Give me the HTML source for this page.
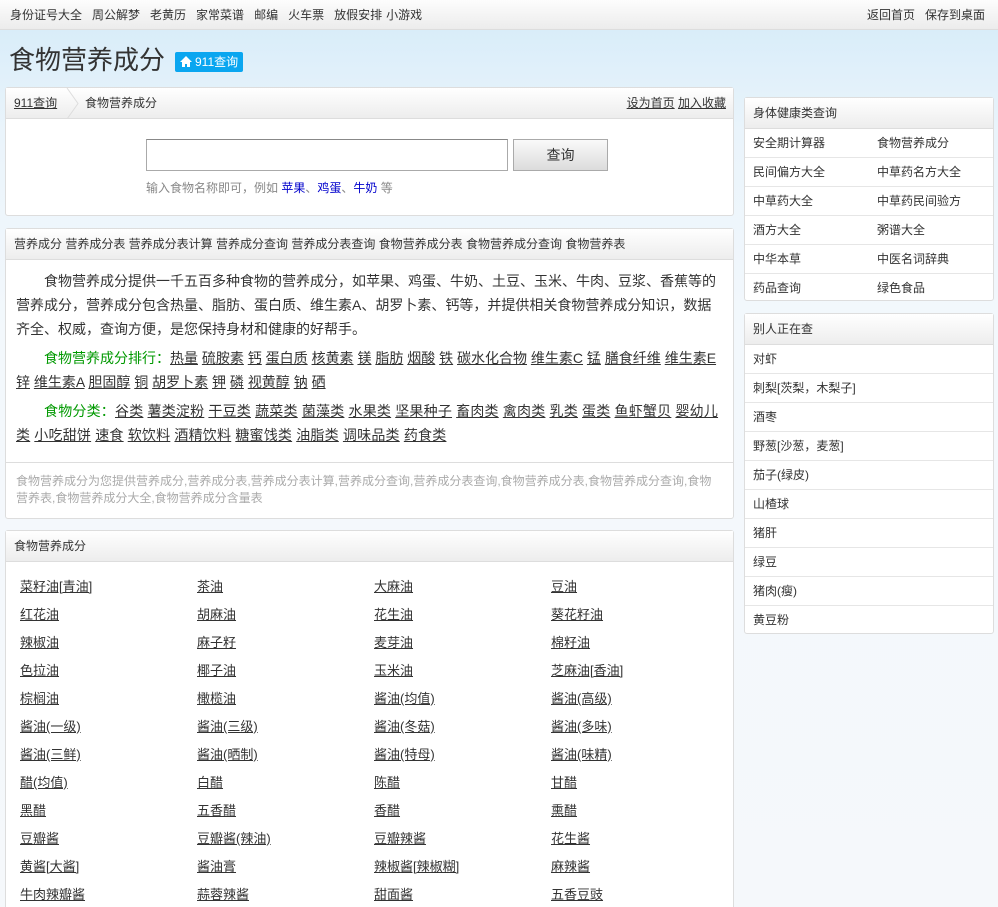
<!DOCTYPE html>
<html><head><meta charset="utf-8"><style>
*{margin:0;padding:0;box-sizing:border-box}
html,body{width:998px;height:907px;overflow:hidden}
body{font-family:"Liberation Sans","Noto Sans CJK SC",sans-serif;font-size:12px;color:#333;background:#fff;position:relative}
.sky{position:absolute;left:0;top:30px;width:998px;height:877px;background:linear-gradient(180deg,#d9edf9 0,#eaf4fb 100px,#f3f8fc 300px,#f5f8fb 100%)}
.top{position:absolute;left:0;top:0;width:998px;height:30px;background:linear-gradient(#fdfdfd,#ececec);border-bottom:1px solid #ddd;line-height:30px;font-size:12px}
.top .l{position:absolute;left:10px}.top .r{position:absolute;right:3px}
.top span{margin-right:10px;color:#333}
.title{position:absolute;left:9px;top:42px;font-size:26px;color:#333;line-height:36px}
.badge{position:absolute;left:175px;top:52px;height:20px;background:#0aa6f0;color:#fff;font-size:12px;line-height:20px;padding:0 5px 0 20px;border-radius:2px}
.badge svg{position:absolute;left:5px;top:4px}
.box{position:absolute;background:#fff;border:1px solid #ddd;border-radius:3px}
.hd{height:31px;line-height:31px;background:linear-gradient(#fff,#ededed);border-bottom:1px solid #ddd;padding-left:8px;font-size:12px;color:#333;position:relative}
a{color:#333;text-decoration:underline}
.side .row{height:29px;line-height:29px;border-bottom:1px solid #e6e6e6;padding-left:8px;font-size:12px;position:relative}
.side .row span{position:absolute;left:132px}
.grid{position:absolute;left:15px;top:45px}
.grid div{position:absolute;width:177px;font-size:13px;text-decoration:underline;color:#333;white-space:nowrap}
p.t{font-size:14px;line-height:24px;padding:0 10px}
p.t u{color:#333}
.g{color:#090}
</style></head><body>
<div class="sky"></div>
<div class="top"><div class="l"><span>身份证号大全</span><span>周公解梦</span><span>老黄历</span><span>家常菜谱</span><span>邮编</span><span>火车票</span><span style="margin-right:4px">放假安排</span><span>小游戏</span></div><div class="r"><span>返回首页</span><span>保存到桌面</span></div></div>
<div class="title">食物营养成分</div>
<div class="badge"><svg width="12" height="11" viewBox="0 0 12 11"><path d="M6 0L0 6h2v5h3V8h2v3h3V6h2z" fill="#fff"/></svg>911查询</div>

<div class="box" style="left:5px;top:87px;width:729px;height:129px">
<div class="hd"><a>911查询</a><svg style="position:absolute;left:60px;top:0" width="14" height="31"><path d="M1 0L12 15.5L1 31" fill="none" stroke="#ddd"/></svg><span style="position:absolute;left:79px">食物营养成分</span><span style="position:absolute;right:7px"><a>设为首页</a> <a>加入收藏</a></span></div>
<div style="position:absolute;left:140px;top:51px;width:362px;height:32px;border:1px solid #aaa;border-top-color:#888;background:#fff"></div>
<div style="position:absolute;left:507px;top:51px;width:95px;height:32px;border:1px solid #aaa;background:linear-gradient(#fafafa,#dcdcdc);text-align:center;line-height:30px;font-size:14px;color:#333">查询</div>
<div style="position:absolute;left:140px;top:91px;font-size:12px;color:#888">输入食物名称即可，例如 <span style="color:#00c">苹果</span>、<span style="color:#00c">鸡蛋</span>、<span style="color:#00c">牛奶</span> 等</div>
</div>

<div class="box" style="left:5px;top:228px;width:729px;height:291px">
<div class="hd">营养成分 营养成分表 营养成分表计算 营养成分查询 营养成分表查询 食物营养成分表 食物营养成分查询 食物营养表</div>
<p class="t" style="padding-top:9px;text-indent:28px">食物营养成分提供一千五百多种食物的营养成分，如苹果、鸡蛋、牛奶、土豆、玉米、牛肉、豆浆、香蕉等的营养成分，营养成分包含热量、脂肪、蛋白质、维生素A、胡罗卜素、钙等，并提供相关食物营养成分知识，数据齐全、权威，查询方便，是您保持身材和健康的好帮手。</p>
<p class="t" style="text-indent:28px;margin-top:5px"><span class="g">食物营养成分排行：</span><u>热量</u> <u>硫胺素</u> <u>钙</u> <u>蛋白质</u> <u>核黄素</u> <u>镁</u> <u>脂肪</u> <u>烟酸</u> <u>铁</u> <u>碳水化合物</u> <u>维生素C</u> <u>锰</u> <u>膳食纤维</u> <u>维生素E</u> <u>锌</u> <u>维生素A</u> <u>胆固醇</u> <u>铜</u> <u>胡罗卜素</u> <u>钾</u> <u>磷</u> <u>视黄醇</u> <u>钠</u> <u>硒</u></p>
<p class="t" style="text-indent:28px;margin-top:5px;letter-spacing:0.2px"><span class="g">食物分类：</span><u>谷类</u> <u>薯类淀粉</u> <u>干豆类</u> <u>蔬菜类</u> <u>菌藻类</u> <u>水果类</u> <u>坚果种子</u> <u>畜肉类</u> <u>禽肉类</u> <u>乳类</u> <u>蛋类</u> <u>鱼虾蟹贝</u> <u>婴幼儿类</u> <u>小吃甜饼</u> <u>速食</u> <u>软饮料</u> <u>酒精饮料</u> <u>糖蜜饯类</u> <u>油脂类</u> <u>调味品类</u> <u>药食类</u></p>
<div style="position:absolute;left:0;top:233px;width:727px;border-top:1px solid #ddd;padding:10px 10px;font-size:12px;line-height:17px;color:#aaa">食物营养成分为您提供营养成分,营养成分表,营养成分表计算,营养成分查询,营养成分表查询,食物营养成分表,食物营养成分查询,食物营养表,食物营养成分大全,食物营养成分含量表</div>
</div>

<div class="box" style="left:5px;top:530px;width:729px;height:400px">
<div class="hd">食物营养成分</div>
<div class="grid" id="g"></div>
</div>

<div class="box side" style="left:744px;top:97px;width:250px;height:204px">
<div class="hd">身体健康类查询</div>
<div class="row">安全期计算器<span>食物营养成分</span></div>
<div class="row">民间偏方大全<span>中草药名方大全</span></div>
<div class="row">中草药大全<span>中草药民间验方</span></div>
<div class="row">酒方大全<span>粥谱大全</span></div>
<div class="row">中华本草<span>中医名词辞典</span></div>
<div class="row" style="border:0">药品查询<span>绿色食品</span></div>
</div>
<div class="box side" style="left:744px;top:313px;width:250px;height:321px">
<div class="hd">别人正在查</div>
<div class="row">对虾</div><div class="row">刺梨[茨梨，木梨子]</div><div class="row">酒枣</div><div class="row">野葱[沙葱，麦葱]</div><div class="row">茄子(绿皮)</div><div class="row">山楂球</div><div class="row">猪肝</div><div class="row">绿豆</div><div class="row">猪肉(瘦)</div><div class="row" style="border:0">黄豆粉</div>
</div>
<script>
var n="菜籽油[青油],茶油,大麻油,豆油,红花油,胡麻油,花生油,葵花籽油,辣椒油,麻子籽,麦芽油,棉籽油,色拉油,椰子油,玉米油,芝麻油[香油],棕榈油,橄榄油,酱油(均值),酱油(高级),酱油(一级),酱油(三级),酱油(冬菇),酱油(多味),酱油(三鲜),酱油(晒制),酱油(特母),酱油(味精),醋(均值),白醋,陈醋,甘醋,黑醋,五香醋,香醋,熏醋,豆瓣酱,豆瓣酱(辣油),豆瓣辣酱,花生酱,黄酱[大酱],酱油膏,辣椒酱[辣椒糊],麻辣酱,牛肉辣瓣酱,蒜蓉辣酱,甜面酱,五香豆豉".split(","),h="";
for(var i=0;i<n.length;i++)h+='<div style="left:'+(i%4*177-1)+'px;top:'+(Math.floor(i/4)*28)+'px">'+n[i]+'</div>';
document.getElementById("g").innerHTML=h;
</script>
</body></html>
